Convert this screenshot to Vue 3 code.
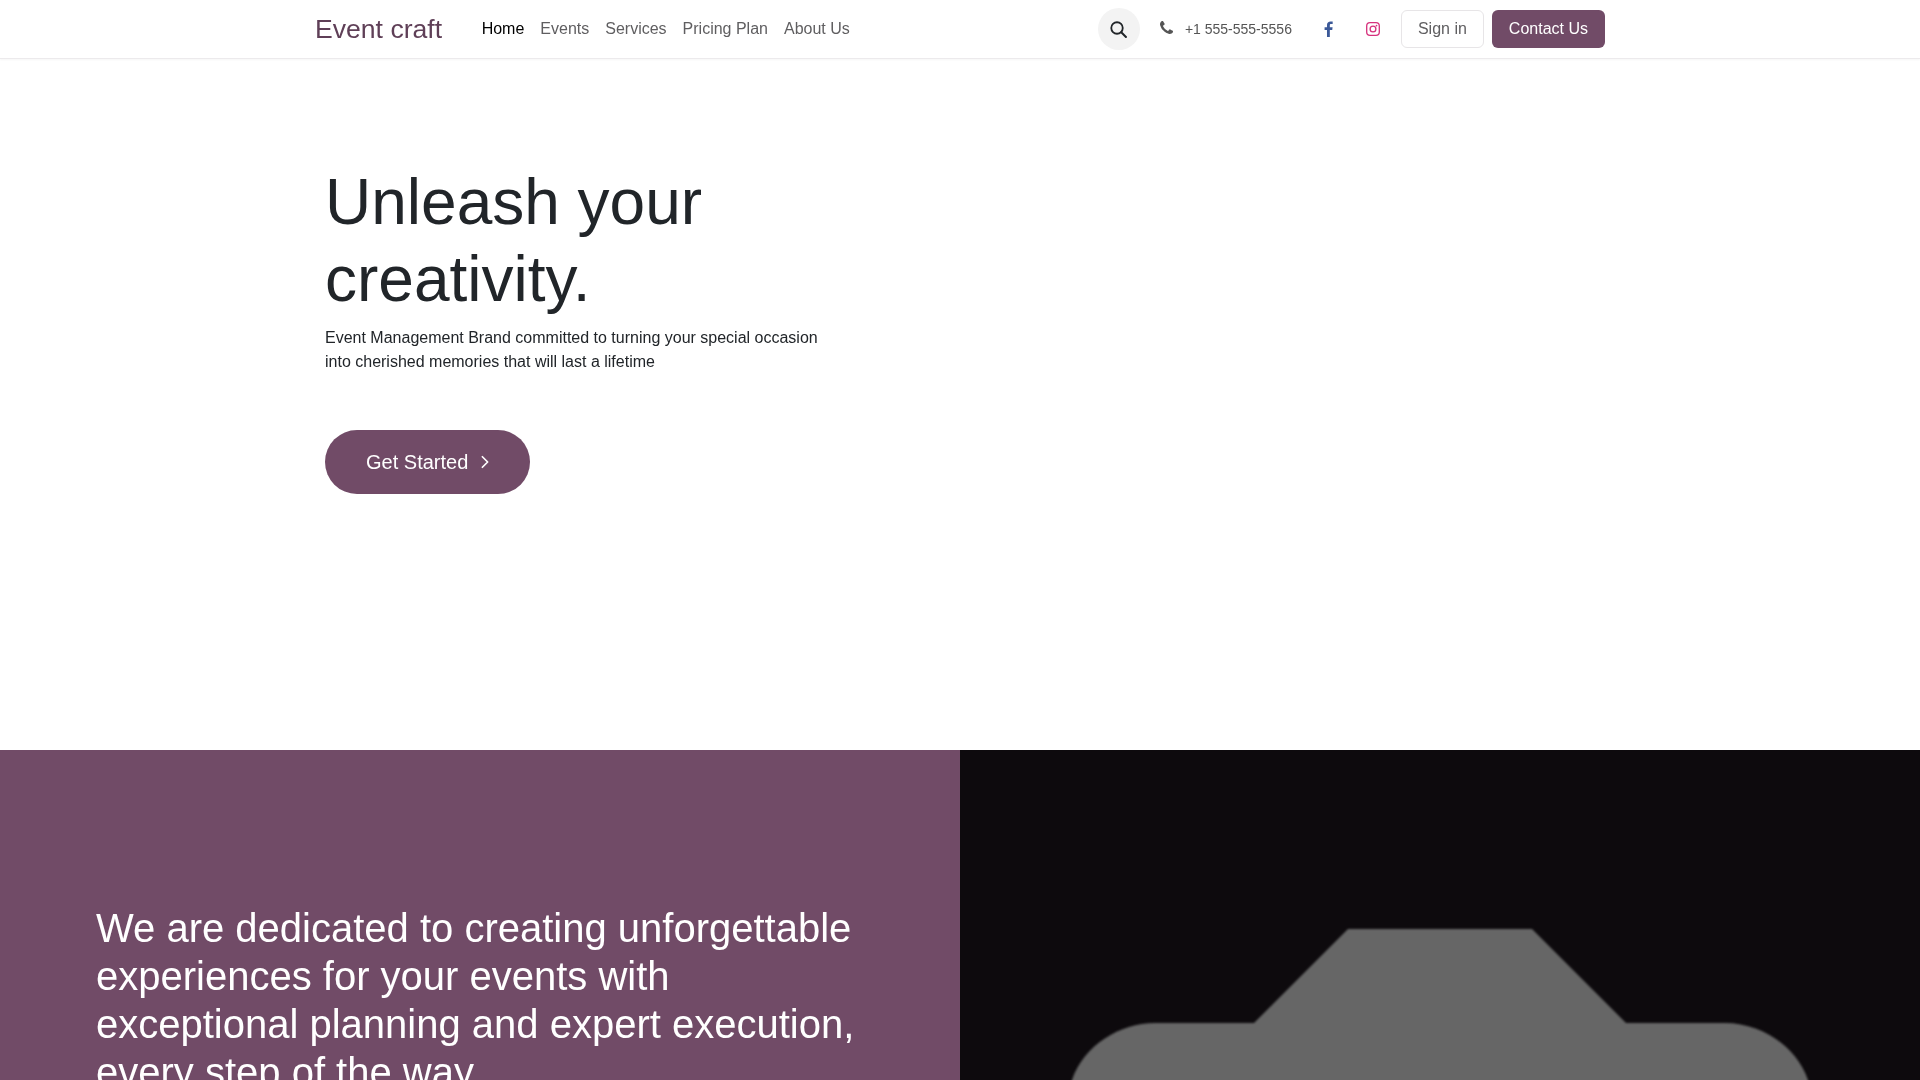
<template>
  <div class="page">
    <header class="navbar">
      <div class="nav-inner">
        <a class="brand">Event craft</a>
        <nav class="links">
          <a v-for="link in links" :key="link" class="link" :class="{ active: link === 'Home' }">{{ link }}</a>
        </nav>
        <div class="right">
          <button class="search" aria-label="Search">
            <svg viewBox="0 0 16 16" width="17" height="17">
              <circle cx="6.6" cy="6.6" r="5.4" fill="none" stroke="#212529" stroke-width="1.7" />
              <path d="M10.6 10.6L15 15" stroke="#212529" stroke-width="1.9" stroke-linecap="round" />
            </svg>
          </button>
          <div class="phone">
            <svg viewBox="0 0 1408 1408" width="13" height="13" class="phone-icon">
              <path fill="#555" d="M1408 1112q0 27-10 70.500t-21 68.500q-21 50-122 106-94 51-186 51-27 0-53-3.500t-57.500-12.500-47-14.500-55.500-20.500-49-18q-98-35-175-83-127-79-264-216t-216-264q-48-77-83-175-3-9-18-49t-20.500-55.500-14.500-47-12.500-57.500-3.500-53q0-92 51-186 56-101 106-122 25-11 68.500-21t70.500-10q14 0 21 3 18 6 53 76 11 19 30 54t35 63.500 31 53.500q3 4 17.500 25t21.500 35.500 7 28.500q0 20-28.500 50t-62 55-62 53-28.500 46q0 9 5 22.500t8.500 20.500 14 24 11.500 19q76 137 174 235t235 174q2 1 19 11.500t24 14 20.500 8.500 22.500 5q18 0 46-28.500t53-62 55-62 50-28.500q14 0 28.500 7t35.500 21.500 25 17.500q25 15 53.500 31t63.500 35 54 30q70 35 76 53 3 7 3 21z" />
            </svg>
            <span>+1 555-555-5556</span>
          </div>
          <a class="social" aria-label="Facebook">
            <svg viewBox="0 0 10 18" width="9" height="16">
              <path fill="#3b5998" d="M6.500 18V10h2.700l.4-3.100H6.500V4.900c0-.9.250-1.500 1.550-1.500H9.700V.6C9.400.560 8.400.5 7.300.5 4.900.5 3.300 1.950 3.300 4.600v2.300H.6V10h2.700v8z" />
            </svg>
          </a>
          <a class="social" aria-label="Instagram">
            <svg viewBox="0 0 16 16" width="14" height="14">
              <rect x=".8" y=".8" width="14.400" height="14.400" rx="3.800" fill="none" stroke="#d6307c" stroke-width="1.500" />
              <circle cx="8" cy="8" r="3.300" fill="none" stroke="#d6307c" stroke-width="1.500" />
              <circle cx="12" cy="4" r="1" fill="#d6307c" />
            </svg>
          </a>
          <a class="btn btn-light">Sign in</a>
          <a class="btn btn-primary">Contact Us</a>
        </div>
      </div>
    </header>

    <main>
      <section class="hero">
        <div class="hero-text">
          <h1>Unleash your creativity.</h1>
          <p>Event Management Brand committed to turning your special occasion into cherished memories that will last a lifetime</p>
          <a class="cta">
            Get Started
            <svg viewBox="0 0 16 16" width="14" height="14">
              <path d="M5 2l6 6-6 6" fill="none" stroke="#fff" stroke-width="2" stroke-linecap="round" stroke-linejoin="round" />
            </svg>
          </a>
        </div>
      </section>

      <section class="split">
        <div class="split-text">
          <h2>We are dedicated to creating unforgettable experiences for your events with exceptional planning and expert execution, every step of the way.</h2>
        </div>
        <div class="split-image">
          <svg viewBox="0 0 960 600" width="960" height="600">
            <defs>
              <filter id="soft"><feGaussianBlur stdDeviation="0.800" /></filter>
            </defs>
            <path fill="#666" filter="url(#soft)" d="M388 179H572L666 273H765C800 273 836 295 848 330V600H112V330C124 295 160 273 195 273H294z" />
          </svg>
        </div>
      </section>
    </main>
  </div>
</template>

<script setup>
const links = ['Home', 'Events', 'Services', 'Pricing Plan', 'About Us'];
</script>

<style>
html,
body {
  margin: 0;
  background: #fff;
}
</style>

<style scoped>
.page {
  height: 1080px;
  overflow: hidden;
  font-family: "Liberation Sans", Arial, sans-serif;
  color: #212529;
  will-change: transform;
}

.navbar {
  height: 58px;
  border-bottom: 1px solid #eceaec;
  box-shadow: 0 1px 2px rgba(0, 0, 0, 0.04);
  background: #fff;
}

.nav-inner {
  width: 1290px;
  height: 58px;
  margin: 0 auto;
  display: flex;
  align-items: center;
}

.brand {
  font-size: 26.6px;
  color: #5f3f57;
  margin-right: 39.500px;
}

.links {
  display: flex;
  gap: 16px;
}

.link {
  font-size: 16px;
  color: #5f5e60;
}

.link.active {
  color: #000;
}

.right {
  margin-left: auto;
  display: flex;
  align-items: center;
}

.search {
  width: 42px;
  height: 42px;
  border: 0;
  border-radius: 50%;
  background: #f3f3f3;
  display: flex;
  align-items: center;
  justify-content: center;
  padding: 0;
  margin-right: 20px;
}

.phone {
  display: flex;
  align-items: center;
  font-size: 14px;
  color: #555;
  margin-right: 15px;
}

.phone-icon {
  margin-right: 12px;
  margin-top: -3px;
}

.social {
  width: 44px;
  display: flex;
  justify-content: center;
}

.btn {
  box-sizing: border-box;
  height: 38px;
  padding: 0 17px;
  border-radius: 6px;
  font-size: 16px;
  display: flex;
  align-items: center;
}

.btn-light {
  border: 1px solid #e7e5e7;
  padding: 0 16px;
  color: #5f5e60;
  margin-left: 6px;
}

.btn-primary {
  background: #714b67;
  color: #fff;
  margin-left: 8px;
}

.hero {
  height: 691px;
  width: 1270px;
  margin: 0 auto;
  padding-top: 1px;
  box-sizing: border-box;
}

.hero-text {
  width: 520px;
  padding-top: 104px;
}

h1 {
  margin: 0;
  font-size: 64px;
  line-height: 77px;
  font-weight: 400;
}

p {
  margin: 8px 0 0;
  font-size: 16px;
  line-height: 24px;
}

.cta {
  box-sizing: border-box;
  margin-top: 56px;
  height: 64px;
  width: 205px;
  padding-left: 41px;
  border-radius: 32px;
  background: #714b67;
  color: #fff;
  font-size: 20px;
  display: flex;
  align-items: center;
  gap: 10px;
}

.split {
  display: grid;
  grid-template-columns: 960px 960px;
  height: 600px;
}

.split-text {
  background: #714b67;
  padding: 154px 96px 0 96px;
}

h2 {
  margin: 0;
  font-size: 40px;
  line-height: 48px;
  font-weight: 400;
  color: #fff;
}

.split-image {
  background: #0d0a0d;
  overflow: hidden;
}

.split-image svg {
  display: block;
}
</style>
